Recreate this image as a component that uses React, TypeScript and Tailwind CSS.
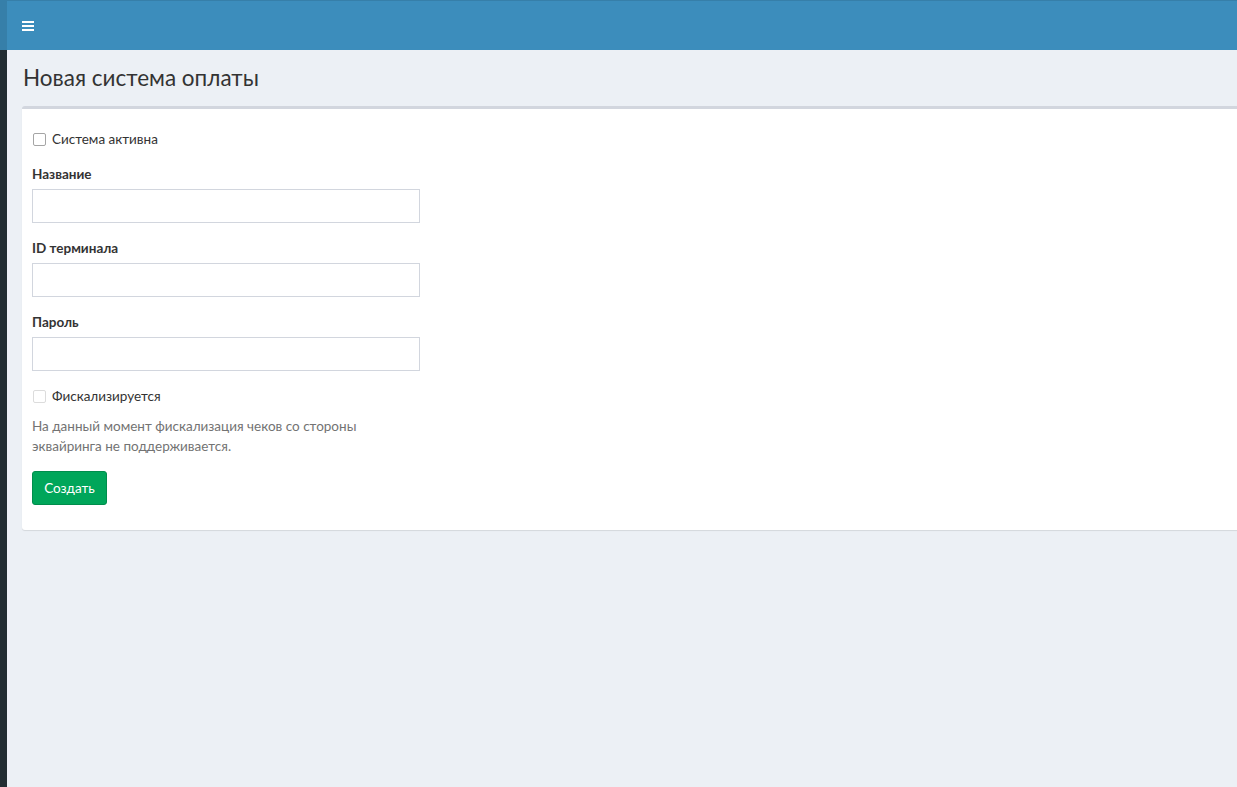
export default function App() {
  return (
    <div
      className="flex min-h-screen w-full overflow-hidden bg-[#ecf0f5] text-[13.5px] text-[#333]"
      style={{ fontFamily: '"Source Sans Pro", Lato, "Noto Sans", sans-serif' }}
    >
      {/* collapsed sidebar edge */}
      <aside className="flex w-[7px] shrink-0 flex-col bg-[#222d32]">
        <div className="h-[50px] bg-[#367fa9]" />
      </aside>

      <main className="flex min-w-0 flex-1 flex-col">
        <header className="flex h-[50px] items-center border-t border-[#367fa9] bg-[#3c8dbc] px-[15px] text-white">
          <button className="flex h-[16px] w-[12px] flex-col justify-center gap-[2px]">
            <span className="h-[2px] w-[12px] bg-white" />
            <span className="h-[2px] w-[12px] bg-white" />
            <span className="h-[2px] w-[12px] bg-white" />
          </button>
        </header>

        <section className="pl-[15px] pt-[13px]">
          <h1 className="m-0 text-[22.5px] leading-[30px] font-normal text-[#333] pl-px">
            Новая система оплаты
          </h1>
        </section>

        <section className="-mr-[6px] pl-[15px] pt-[13px]">
          <div className="rounded-[3px] border-t-[3px] border-[#d2d6de] bg-white shadow-[0_1px_1px_rgba(0,0,0,0.1)]">
            <form className="flex flex-col p-[10px]" onSubmit={(e) => e.preventDefault()}>
              <label className="mt-[10px] mb-[15px] flex h-[20px] items-center gap-[6px] pl-px">
                <span className="h-[13px] w-[13px] rounded-[2px] border border-[#a5a5a5] bg-white" />
                <span>Система активна</span>
              </label>

              <Field label="Название" />
              <Field label="ID терминала" />
              <Field label="Пароль" />

              <label className="flex h-[20px] items-center gap-[6px] pl-px">
                <span className="h-[13px] w-[13px] rounded-[2px] border border-[#dcdcdc] bg-white" />
                <span>Фискализируется</span>
              </label>

              <p className="mt-[10px] mb-[15px] leading-[20px] text-[#737373]">
                На данный момент фискализация чеков со стороны
                <br />
                эквайринга не поддерживается.
              </p>

              <div className="mb-[15px]">
                <button
                  type="submit"
                  className="h-[34px] w-[75px] rounded-[3px] border border-[#008d4c] bg-[#00a65a] text-[13.5px] text-white"
                >
                  Создать
                </button>
              </div>
            </form>
          </div>
        </section>
      </main>
    </div>
  );
}

function Field({ label }: { label: string }) {
  return (
    <div className="mb-[15px] flex flex-col">
      <label className="mb-[5px] leading-[20px] font-bold">{label}</label>
      <input
        type="text"
        className="h-[34px] w-[388px] border border-[#d2d6de] bg-white px-3 outline-none"
      />
    </div>
  );
}
